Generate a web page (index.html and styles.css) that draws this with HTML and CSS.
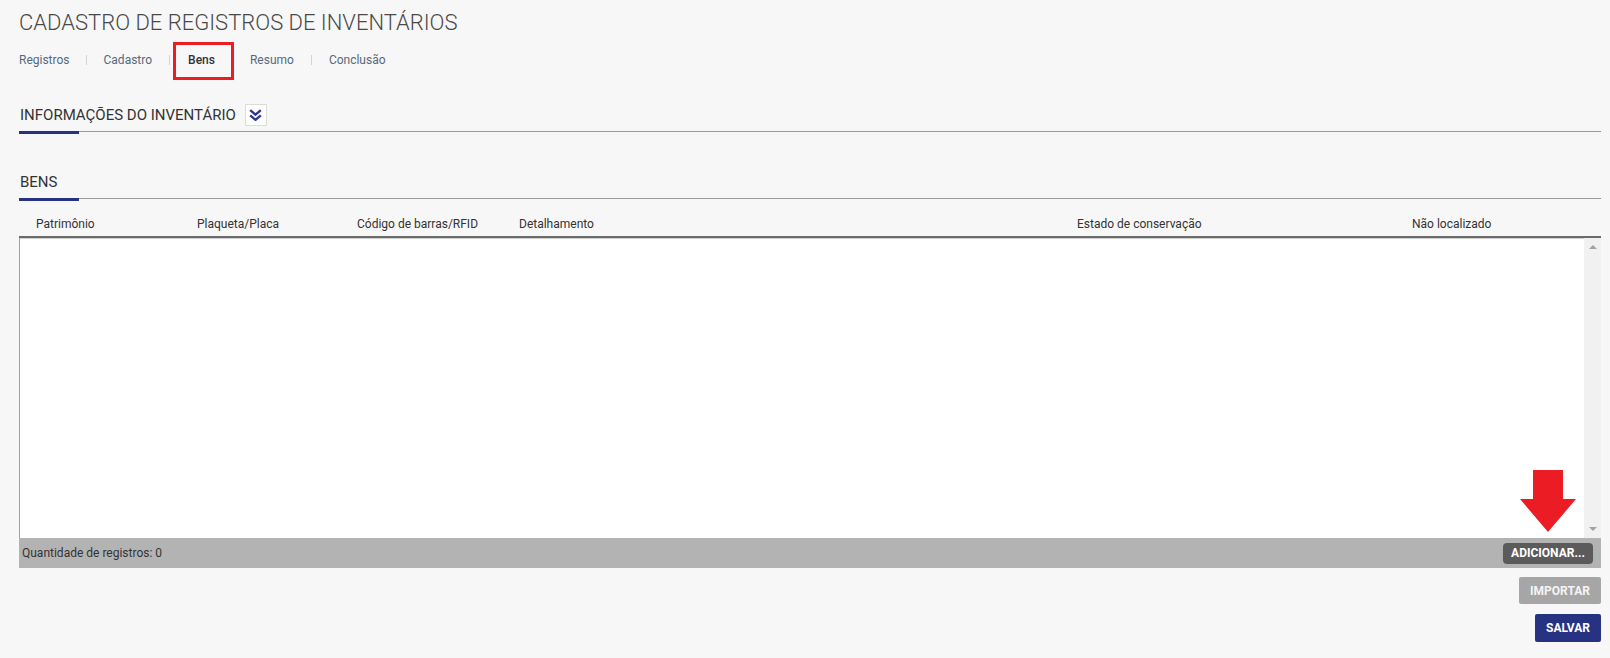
FILE: index.html
```html
<!DOCTYPE html>
<html lang="pt">
<head>
<meta charset="utf-8">
<title>Cadastro de Registros de Inventários</title>
<link rel="stylesheet" href="styles.css">
</head>
<body>
<div class="page">
  <h1 class="title">CADASTRO DE REGISTROS DE INVENTÁRIOS</h1>
  <nav class="tabs">
    <span class="tab">Registros</span><span class="sep"></span>
    <span class="tab">Cadastro</span><span class="sep wide"></span>
    <span class="tab active">Bens</span><span class="sep hidden"></span>
    <span class="tab">Resumo</span><span class="sep mid"></span>
    <span class="tab">Conclusão</span>
  </nav>

  <section class="section first">
    <div class="section-head">
      <span class="section-title">INFORMAÇÕES DO INVENTÁRIO</span>
      <span class="toggle">
        <svg width="13" height="12" viewBox="0 0 13 12"><path d="M1.2 1.2 L6.5 5.6 L11.8 1.2 M1.2 6.4 L6.5 10.8 L11.8 6.4" fill="none" stroke="#2b3694" stroke-width="2.4"/></svg>
      </span>
    </div>
    <div class="section-bar"></div>
  </section>

  <section class="section second">
    <div class="section-head">
      <span class="section-title">BENS</span>
    </div>
    <div class="section-bar"></div>
  </section>

  <div class="grid">
    <div class="grid-head">
      <span class="c1">Patrimônio</span>
      <span class="c2">Plaqueta/Placa</span>
      <span class="c3">Código de barras/RFID</span>
      <span class="c4">Detalhamento</span>
      <span class="c5">Estado de conservação</span>
      <span class="c6">Não localizado</span>
    </div>
    <div class="grid-body">
      <div class="rows"></div>
      <div class="scrollbar">
        <span class="arrow up"></span>
        <span class="arrow down"></span>
      </div>
      <svg class="red-arrow" width="56" height="62" viewBox="0 0 56 62"><polygon points="13,0 43,0 43,29 56,29 28,62 0,29 13,29" fill="#ec1c24"/></svg>
    </div>
    <div class="grid-foot">
      <span class="count">Quantidade de registros: 0</span>
      <button class="btn btn-add">ADICIONAR...</button>
    </div>
  </div>

  <div class="actions">
    <button class="btn btn-import">IMPORTAR</button>
    <button class="btn btn-save">SALVAR</button>
  </div>
</div>
</body>
</html>
```

FILE: styles.css
```css
html, body {
  margin: 0;
  padding: 0;
  background: #f7f7f7;
}
body {
  font-family: Roboto, "Liberation Sans", Arial, sans-serif;
  color: #333;
}
.page {
  padding: 11px 9px 0 19px;
}
.title {
  margin: 0;
  font-size: 22px;
  line-height: 24px;
  font-weight: 300;
  color: #4a4a4a;
}
.tabs {
  display: flex;
  align-items: center;
  margin-top: 6px;
  height: 38px;
  font-size: 12px;
  line-height: 38px;
}
.tab {
  color: #56697c;
  position: relative;
}
.tab.active {
  color: #333;
  font-weight: 500;
}
.tab.active::after {
  content: "";
  position: absolute;
  left: -15px;
  right: -19px;
  top: 1px;
  bottom: -1px;
  border: 3px solid #ec1c24;
}
.sep {
  width: 1px;
  height: 10px;
  background: #d4d4d4;
  margin: 0 17px 0 16px;
}
.sep.wide {
  margin: 0 18px 0 17px;
}
.sep.mid {
  margin: 0 17px 0 17px;
}
.sep.hidden {
  background: transparent;
  margin: 0 17px 0 17px;
}
.section.first {
  margin-top: 25px;
}
.section.second {
  margin-top: 37px;
}
.section-head {
  display: flex;
  align-items: center;
  height: 22px;
  padding-bottom: 5px;
  border-bottom: 1px solid #9a9a9a;
}
.section-title {
  font-size: 15px;
  line-height: 22px;
  color: #333;
  padding-left: 1px;
}
.toggle {
  display: flex;
  align-items: center;
  justify-content: center;
  box-sizing: border-box;
  width: 22px;
  height: 22px;
  margin-left: 9px;
  background: #fff;
  border: 1px solid #dcdcdc;
}
.section-bar {
  width: 60px;
  height: 3px;
  margin-top: -1px;
  background: #283282;
}
.grid-head {
  display: grid;
  grid-template-columns: 161px 160px 162px 558px 335px 1fr;
  padding: 16px 0 5px 17px;
  font-size: 12px;
  line-height: 14px;
  color: #333;
  border-bottom: 2px solid #6b6b6b;
}
.grid-body {
  position: relative;
  display: flex;
  height: 300px;
  background: #fff;
  border-left: 1px solid #a3a3a3;
}
.rows {
  flex: 1;
  border-top: 1px solid #d0d0d0;
}
.scrollbar {
  width: 17px;
  background: #f1f1f1;
  display: flex;
  flex-direction: column;
  justify-content: space-between;
  align-items: center;
  padding: 7px 0 7px;
  box-sizing: border-box;
}
.arrow {
  width: 0;
  height: 0;
  border-left: 4px solid transparent;
  border-right: 4px solid transparent;
}
.arrow.up {
  border-bottom: 4px solid #a3a3a3;
}
.arrow.down {
  border-top: 4px solid #a3a3a3;
}
.red-arrow {
  position: absolute;
  right: 25px;
  top: 232px;
}
.grid-foot {
  display: flex;
  align-items: center;
  justify-content: space-between;
  height: 30px;
  padding: 0 8px 0 3px;
  background: #b3b3b3;
}
.count {
  font-size: 12px;
  color: #333;
}
.btn {
  border: none;
  font-family: Roboto, "Liberation Sans", Arial, sans-serif;
  font-weight: 700;
  font-size: 12px;
  color: #fff;
  padding: 0;
  cursor: pointer;
}
.btn-add {
  width: 90px;
  height: 21px;
  background: #5b5b5b;
  border-radius: 4px;
}
.actions {
  display: flex;
  flex-direction: column;
  align-items: flex-end;
}
.btn-import {
  margin-top: 9px;
  width: 82px;
  height: 27px;
  background: #a6a6a6;
  color: #f4f4f4;
  border-radius: 2px;
}
.btn-save {
  margin-top: 10px;
  width: 66px;
  height: 28px;
  background: #283282;
  border-radius: 2px;
}
```
